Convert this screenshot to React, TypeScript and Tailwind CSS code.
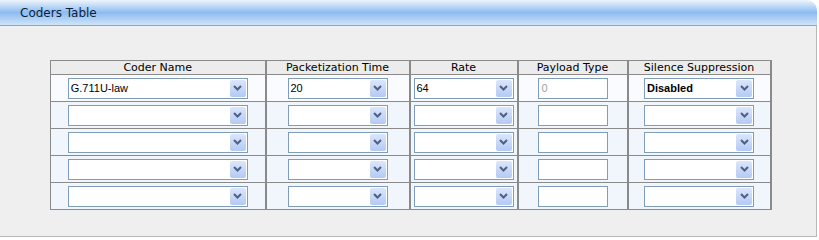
import React from "react"

const cols = [
  { title: "Coder Name", w: 215, kind: "select", inner: 180 },
  { title: "Packetization Time", w: 144, kind: "select", inner: 100 },
  { title: "Rate", w: 108, kind: "select", inner: 100 },
  { title: "Payload Type", w: 110, kind: "input", inner: 70 },
  { title: "Silence Suppression", w: 143, kind: "select", inner: 110 },
]

const rows = [
  ["G.711U-law", "20", "64", "0", "Disabled"],
  ["", "", "", "", ""],
  ["", "", "", "", ""],
  ["", "", "", "", ""],
  ["", "", "", "", ""],
]

function Chevron() {
  return (
    <svg width="9" height="6" viewBox="0 0 9 6">
      <polyline points="1,1 4.5,4.5 8,1" fill="none" stroke="#4d6185" strokeWidth="2" />
    </svg>
  )
}

function FakeSelect({ value, width, bold }: { value: string; width: number; bold?: boolean }) {
  return (
    <div
      className="flex h-[21px] items-center border border-[#7f9db9] bg-white pl-[2px] pr-[1px]"
      style={{ width }}
    >
      <span className={`flex-1 text-[11px] text-black ${bold ? "font-semibold" : ""}`}>{value}</span>
      <span className="flex h-[17px] w-[16px] items-center justify-center rounded-[2px] bg-gradient-to-b from-[#dbe6fb] to-[#b4c9f4]">
        <Chevron />
      </span>
    </div>
  )
}

function FakeInput({ value, width }: { value: string; width: number }) {
  return (
    <div
      className="flex h-[21px] items-center border border-[#7f9db9] bg-white px-[3px] text-[11px] text-[#a0a0a0]"
      style={{ width }}
    >
      {value}
    </div>
  )
}

export default function App() {
  return (
    <div className="h-[240px] w-[819px] bg-white font-['Liberation_Sans',sans-serif]">
      <div className="flex h-[26px] w-[817px] items-center rounded-tr-[10px] border-b border-[#8fa6c2] bg-gradient-to-b from-[#eef5fd] via-[#8dbbef] to-[#cfe4f9] pl-[20px]">
        <span className="font-['DejaVu_Sans',sans-serif] text-[12px] text-[#0b1f3d]">Coders Table</span>
      </div>
      <div className="h-[211px] w-[817px] border-r border-b border-[#b8b8b8] bg-[#efefef] pt-[34px] pl-[50px]">
        <table className="border-collapse border border-[#8a8a8a]">
          <thead>
            <tr className="h-[14px] bg-[#ececec]">
              {cols.map((c) => (
                <th
                  key={c.title}
                  className="border-r-2 border-b border-[#8a8a8a] p-0 text-center font-['DejaVu_Sans',sans-serif] text-[11px] leading-[13px] font-normal text-black"
                  style={{ width: c.w }}
                >
                  {c.title}
                </th>
              ))}
            </tr>
          </thead>
          <tbody>
            {rows.map((r, i) => (
              <tr key={i} className={`h-[27px] ${i === 0 ? "bg-[#fafbfe]" : "bg-[#f1f5fc]"}`}>
                {cols.map((c, j) => (
                  <td key={j} className="border-r-2 border-b border-[#8a8a8a] p-0">
                    <div className="flex justify-center">
                      {c.kind === "select" ? (
                        <FakeSelect value={r[j]} width={c.inner} bold={j === 4} />
                      ) : (
                        <FakeInput value={r[j]} width={c.inner} />
                      )}
                    </div>
                  </td>
                ))}
              </tr>
            ))}
          </tbody>
        </table>
      </div>
    </div>
  )
}
